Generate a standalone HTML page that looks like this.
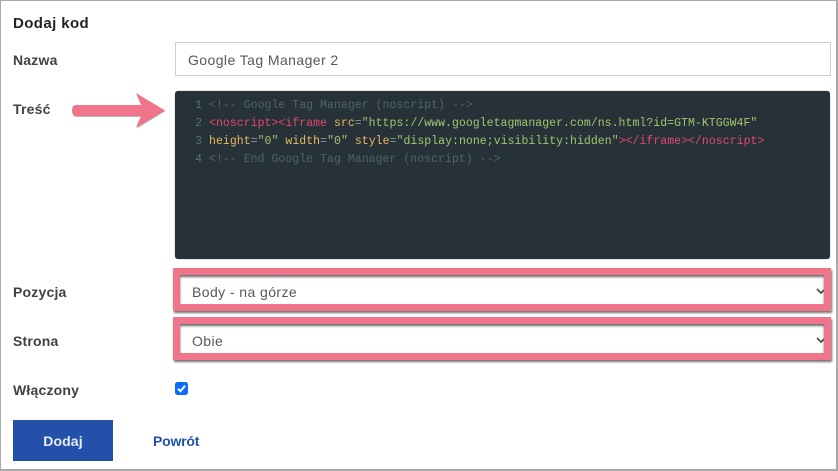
<!DOCTYPE html>
<html><head><meta charset="utf-8">
<style>
html,body{margin:0;padding:0;background:#fff}
#p{position:relative;width:838px;height:471px;overflow:hidden;background:#fff;font-family:"Liberation Sans",sans-serif;color:#3f4145}
#b{position:absolute;left:0;top:0;width:835px;height:468px;border:solid #a9a9a9;border-width:1px 2px 2px 1px;box-sizing:content-box}
.a{position:absolute;white-space:pre}
.l{font-weight:700;font-size:14px;line-height:18px;left:13px;color:#3f4145;letter-spacing:.2px}
.c{font-family:"Liberation Mono",monospace;font-size:11.5px;letter-spacing:.04px;line-height:18px;left:209px;color:#90a4ae}
.n{left:190px;width:12px;text-align:right;color:#4b7378;font-family:"Liberation Mono",monospace;font-size:11.5px;line-height:18px}
.g{color:#4e636e}.r{color:#e5476a}.y{color:#e9b85d}.s{color:#a5c46f}.e{color:#8a979d}
.fr{position:absolute;left:173px;width:644px;height:29px;border:7px solid #f0758a;box-shadow:1px 2px 2px rgba(40,40,40,.65),inset 0 2px 2px rgba(40,40,40,.7);background:#fff}
.t{font-size:14px;line-height:18px;color:#55585c;letter-spacing:.42px}
</style></head>
<body><div id="p">
<div id="b"></div>
<div class="a" style="left:13px;top:15px;font-size:15px;line-height:18px;font-weight:700;color:#212529;letter-spacing:.4px">Dodaj kod</div>

<div class="a l" style="top:51px">Nazwa</div>
<div class="a" style="left:175px;top:42px;width:654px;height:32px;border:1px solid #cfcfcf"></div>
<div class="a t" style="left:188px;top:51px">Google Tag Manager 2</div>

<div class="a l" style="top:100px">Treść</div>
<div class="a" style="left:175px;top:91px;width:655px;height:168px;background:#263238;border-radius:3px;box-shadow:0 0 1px rgba(0,0,0,.5)"></div>
<div class="a n" style="top:97px">1</div>
<div class="a n" style="top:115px">2</div>
<div class="a n" style="top:133px">3</div>
<div class="a n" style="top:151px">4</div>
<div class="a c g" style="top:97px">&lt;!-- Google Tag Manager (noscript) --&gt;</div>
<div class="a c" style="top:115px"><span class="r">&lt;noscript&gt;&lt;iframe</span> <span class="y">src</span><span class="e">=</span><span class="s">"https://www.googletagmanager.com/ns.html?id=GTM-KTGGW4F"</span></div>
<div class="a c" style="top:133px"><span class="y">height</span><span class="e">=</span><span class="s">"0"</span> <span class="y">width</span><span class="e">=</span><span class="s">"0"</span> <span class="y">style</span><span class="e">=</span><span class="s">"display:none;visibility:hidden"</span><span class="r">&gt;&lt;/iframe&gt;&lt;/noscript&gt;</span></div>
<div class="a c g" style="top:151px">&lt;!-- End Google Tag Manager (noscript) --&gt;</div>

<svg class="a" style="left:68px;top:90px" width="102" height="42" viewBox="68 90 102 42">
<path d="M76 106H142L137 94L165.500 111L137 128.500L142 117H76Q72.500 117 72.500 111.500Q72.500 106 76 106Z" fill="#444" opacity=".4"/>
<path d="M76 105H141L136 93L165 110.500L136 127.500L141 116H76Q72 116 72 110.500Q72 105 76 105Z" fill="#f0758a"/>
</svg>

<div class="a l" style="top:283px">Pozycja</div>
<div class="fr" style="top:268px"></div>
<div class="a t" style="left:192px;top:283px">Body - na górze</div>
<svg class="a" style="left:815px;top:287px" width="9" height="9" viewBox="0 0 9 9"><path d="M2 2L6 6L9 3" fill="none" stroke="#4d4d4d" stroke-width="1.700"/></svg>

<div class="a l" style="top:332px">Strona</div>
<div class="fr" style="top:317px"></div>
<div class="a t" style="left:192px;top:332px">Obie</div>
<svg class="a" style="left:815px;top:336px" width="9" height="9" viewBox="0 0 9 9"><path d="M2 2L6 6L9 3" fill="none" stroke="#4d4d4d" stroke-width="1.700"/></svg>

<div class="a l" style="top:381px">Włączony</div>
<div class="a" style="left:175px;top:382px;width:13px;height:13px;background:#0d6efd;border-radius:2.500px"></div>
<svg class="a" style="left:175px;top:382px" width="13" height="13" viewBox="0 0 13 13"><path d="M3 6.800L5.400 9.200L10 3.800" fill="none" stroke="#fff" stroke-width="2"/></svg>

<div class="a" style="left:13px;top:420px;width:100px;height:41px;background:#2350a9"></div>
<div class="a" style="left:13px;top:432px;width:100px;text-align:center;color:#e8edf6;font-size:14px;line-height:18px;font-weight:700;letter-spacing:.1px">Dodaj</div>
<div class="a" style="left:153px;top:432px;color:#2350a9;font-size:14px;line-height:18px;font-weight:700;letter-spacing:-.2px">Powrót</div>
</div></body></html>
